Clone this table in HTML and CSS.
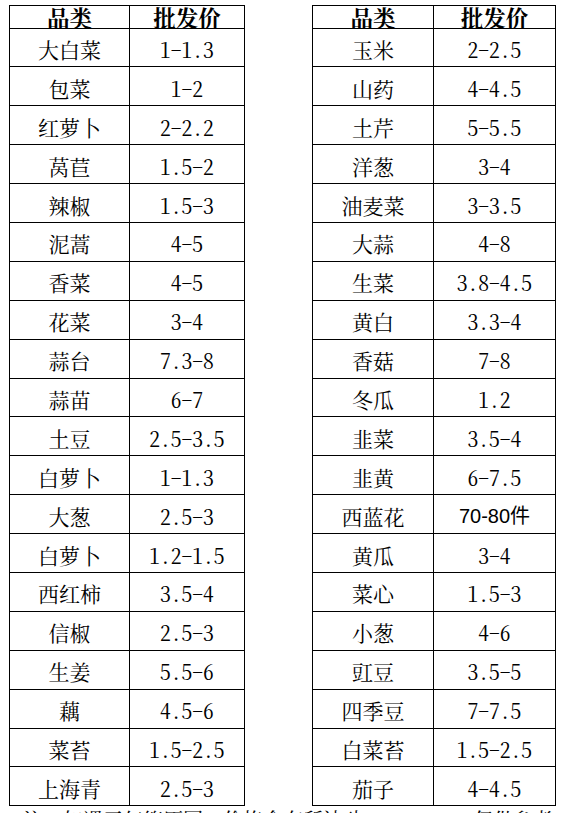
FILE: index.html
```html
<!DOCTYPE html>
<html lang="zh">
<head>
<meta charset="utf-8">
<title>蔬菜批发价</title>
<link rel="stylesheet" href="styles.css">
</head>
<body>
<div class="page">
  <div class="tables">
    <div class="tbl tbl-left">
      <div class="cell head">品类</div><div class="cell head">批发价</div>
      <div class="cell">大白菜</div><div class="cell num">1-1.3</div>
      <div class="cell">包菜</div><div class="cell num">1-2</div>
      <div class="cell">红萝卜</div><div class="cell num">2-2.2</div>
      <div class="cell">莴苣</div><div class="cell num">1.5-2</div>
      <div class="cell">辣椒</div><div class="cell num">1.5-3</div>
      <div class="cell">泥蒿</div><div class="cell num">4-5</div>
      <div class="cell">香菜</div><div class="cell num">4-5</div>
      <div class="cell">花菜</div><div class="cell num">3-4</div>
      <div class="cell">蒜台</div><div class="cell num">7.3-8</div>
      <div class="cell">蒜苗</div><div class="cell num">6-7</div>
      <div class="cell">土豆</div><div class="cell num">2.5-3.5</div>
      <div class="cell">白萝卜</div><div class="cell num">1-1.3</div>
      <div class="cell">大葱</div><div class="cell num">2.5-3</div>
      <div class="cell">白萝卜</div><div class="cell num">1.2-1.5</div>
      <div class="cell">西红柿</div><div class="cell num">3.5-4</div>
      <div class="cell">信椒</div><div class="cell num">2.5-3</div>
      <div class="cell">生姜</div><div class="cell num">5.5-6</div>
      <div class="cell">藕</div><div class="cell num">4.5-6</div>
      <div class="cell">菜苔</div><div class="cell num">1.5-2.5</div>
      <div class="cell">上海青</div><div class="cell num">2.5-3</div>
    </div>
    <div class="tbl tbl-right">
      <div class="cell head">品类</div><div class="cell head">批发价</div>
      <div class="cell">玉米</div><div class="cell num">2-2.5</div>
      <div class="cell">山药</div><div class="cell num">4-4.5</div>
      <div class="cell">土芹</div><div class="cell num">5-5.5</div>
      <div class="cell">洋葱</div><div class="cell num">3-4</div>
      <div class="cell">油麦菜</div><div class="cell num">3-3.5</div>
      <div class="cell">大蒜</div><div class="cell num">4-8</div>
      <div class="cell">生菜</div><div class="cell num">3.8-4.5</div>
      <div class="cell">黄白</div><div class="cell num">3.3-4</div>
      <div class="cell">香菇</div><div class="cell num">7-8</div>
      <div class="cell">冬瓜</div><div class="cell num">1.2</div>
      <div class="cell">韭菜</div><div class="cell num">3.5-4</div>
      <div class="cell">韭黄</div><div class="cell num">6-7.5</div>
      <div class="cell">西蓝花</div><div class="cell num alt">70-80件</div>
      <div class="cell">黄瓜</div><div class="cell num">3-4</div>
      <div class="cell">菜心</div><div class="cell num">1.5-3</div>
      <div class="cell">小葱</div><div class="cell num">4-6</div>
      <div class="cell">豇豆</div><div class="cell num">3.5-5</div>
      <div class="cell">四季豆</div><div class="cell num">7-7.5</div>
      <div class="cell">白菜苔</div><div class="cell num">1.5-2.5</div>
      <div class="cell">茄子</div><div class="cell num">4-4.5</div>
    </div>
  </div>
  <p class="note">注：如遇天气等原因，价格会有所波动，　　　　　仅供参考。</p>
</div>
</body>
</html>
```

FILE: styles.css
```css
html, body {
  margin: 0;
  padding: 0;
  background: #fff;
}

.page {
  padding: 4.5px 0 0 9px;
  font-family: "Noto Serif CJK SC", "Noto Sans CJK SC", serif;
  color: #000;
}

.tables {
  display: flex;
  gap: 67px;
  align-items: flex-start;
}

.tbl {
  display: grid;
  grid-template-rows: 23px repeat(20, 38.9px);
  border-left: 1.5px solid #000;
  border-top: 1.5px solid #000;
}

.tbl-left {
  grid-template-columns: 120px 115px;
}

.tbl-right {
  grid-template-columns: 121px 122px;
}

.cell {
  box-sizing: border-box;
  border-right: 1.5px solid #000;
  border-bottom: 1.5px solid #000;
  display: flex;
  justify-content: center;
  align-items: center;
  padding-top: 3px;
  font-size: 21px;
  line-height: 24px;
  overflow: hidden;
  white-space: nowrap;
}

.head {
  align-items: flex-start;
  padding-top: 0;
  margin-top: -1px;
  font-size: 22.5px;
  line-height: 24px;
  font-weight: 700;
}

.num {
  font-family: "Noto Serif CJK SC", "Liberation Serif", serif;
  font-feature-settings: "hwid" 1;
  font-size: 21.5px;
}

.num.alt {
  font-family: "Liberation Sans", "Noto Sans CJK SC", sans-serif;
  font-feature-settings: normal;
  font-size: 20px;
}

.note {
  margin: 2px 0 0 14px;
  font-size: 20px;
  line-height: 24px;
  white-space: nowrap;
}
```
